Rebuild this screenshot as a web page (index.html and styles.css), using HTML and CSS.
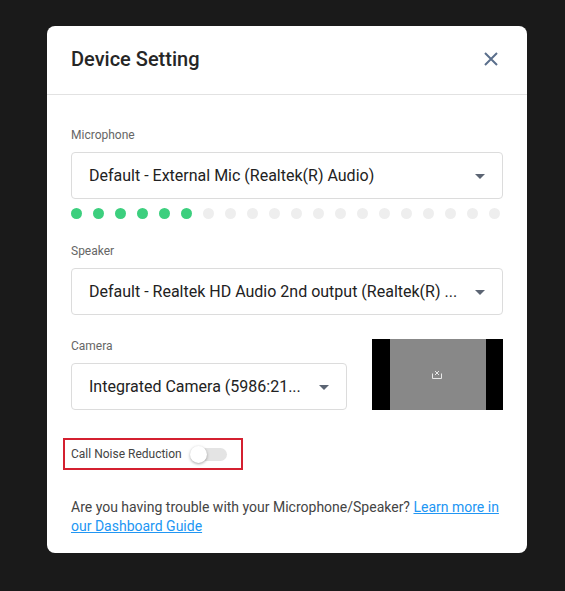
FILE: index.html
```html
<!DOCTYPE html>
<html>
<head>
<meta charset="utf-8">
<link rel="stylesheet" href="styles.css">
</head>
<body>
<div class="modal">
  <div class="header">
    <h1 class="title">Device Setting</h1>
    <svg class="close" width="16" height="16" viewBox="0 0 16 16"><path d="M2 2 L14 14 M14 2 L2 14" stroke="#5b6f8c" stroke-width="2" fill="none"/></svg>
  </div>
  <div class="content">
    <div class="label">Microphone</div>
    <div class="select"><span class="value">Default - External Mic (Realtek(R) Audio)</span><span class="caret"></span></div>
    <div class="dots">
      <span class="dot on"></span><span class="dot on"></span><span class="dot on"></span><span class="dot on"></span><span class="dot on"></span><span class="dot on"></span>
      <span class="dot"></span><span class="dot"></span><span class="dot"></span><span class="dot"></span><span class="dot"></span><span class="dot"></span><span class="dot"></span><span class="dot"></span><span class="dot"></span><span class="dot"></span><span class="dot"></span><span class="dot"></span><span class="dot"></span><span class="dot"></span>
    </div>

    <div class="label speaker-label">Speaker</div>
    <div class="select"><span class="value">Default - Realtek HD Audio 2nd output (Realtek(R) ...</span><span class="caret"></span></div>

    <div class="camera-row">
      <div class="camera-col">
        <div class="label">Camera</div>
        <div class="select camera-select"><span class="value">Integrated Camera (5986:21...</span><span class="caret"></span></div>
      </div>
      <div class="preview">
        <div class="preview-inner">
          <svg width="12" height="10" viewBox="0 0 12 10"><path d="M1.5 3.5 V8.5 H10.5 V3.5 M4 1 L8 5 M8 1 L4 5" stroke="#e8e8e8" stroke-width="1" fill="none"/></svg>
        </div>
      </div>
    </div>

    <div class="noise">
      <span class="noise-text">Call Noise Reduction</span>
      <span class="toggle"><span class="thumb"></span></span>
    </div>

    <p class="help">Are you having trouble with your Microphone/Speaker? <a href="#">Learn more in our Dashboard Guide</a></p>
  </div>
</div>
</body>
</html>
```

FILE: styles.css
```css
html, body {
  margin: 0;
  padding: 0;
}
body {
  background: #1a1a1a;
  width: 565px;
  height: 591px;
  overflow: hidden;
  font-family: Roboto, "Liberation Sans", sans-serif;
  padding-top: 26px;
  box-sizing: border-box;
}
.modal {
  margin-left: 47px;
  width: 480px;
  height: 527px;
  background: #fff;
  border-radius: 8px;
  box-sizing: border-box;
}
.header {
  height: 69px;
  border-bottom: 1px solid #e2e2e2;
  box-sizing: border-box;
  display: flex;
  align-items: center;
  justify-content: space-between;
  padding: 0 28px 2px 24px;
}
.title {
  margin: 0;
  font-size: 20px;
  font-weight: 500;
  color: #262626;
}
.close {
  display: block;
  margin-top: 0;
}
.content {
  padding: 33px 24px 0 24px;
}
.label {
  font-size: 12px;
  line-height: 14px;
  color: #666;
  margin-bottom: 10px;
}
.speaker-label {
  margin-top: 25px;
}
.select {
  height: 47px;
  border: 1px solid #dcdcdc;
  border-radius: 4px;
  box-sizing: border-box;
  display: flex;
  align-items: center;
  justify-content: space-between;
  padding: 0 17px 0 17px;
}
.value {
  font-size: 16px;
  color: #222;
  white-space: nowrap;
}
.caret {
  width: 0;
  height: 0;
  border-left: 5px solid transparent;
  border-right: 5px solid transparent;
  border-top: 5px solid #5b6473;
  margin-top: 2px;
}
.dots {
  display: flex;
  gap: 11px;
  margin-top: 9px;
}
.dot {
  width: 11px;
  height: 11px;
  border-radius: 50%;
  background: #eeeeee;
}
.dot.on {
  background: #3ccf7e;
}
.camera-row {
  display: flex;
  gap: 25px;
  margin-top: 24px;
}
.camera-col {
  width: 276px;
}
.camera-select {
  width: 276px;
  padding-right: 17px;
}
.preview {
  width: 131px;
  height: 71px;
  background: #000;
  display: flex;
  justify-content: center;
}
.preview-inner {
  width: 96px;
  height: 71px;
  background: #888888;
  display: flex;
  align-items: center;
  justify-content: center;
  margin-left: 1px;
}
.preview-inner svg {
  margin-top: 1px;
  margin-left: -2px;
}
.noise {
  display: inline-flex;
  align-items: center;
  margin-top: 28px;
  margin-left: -8px;
  width: 180px;
  height: 32px;
  box-sizing: border-box;
  border: 2px solid #d42030;
  padding-left: 6px;
}
.noise-text {
  font-size: 12px;
  color: #444;
}
.toggle {
  position: relative;
  width: 35px;
  height: 13px;
  border-radius: 7px;
  background: #e4e4e4;
  margin-left: 10px;
  margin-top: 1px;
}
.thumb {
  position: absolute;
  left: -2px;
  top: -2px;
  width: 17px;
  height: 17px;
  border-radius: 50%;
  background: #fff;
  box-shadow: 0 1px 3px rgba(0,0,0,0.35);
}
.help {
  margin: 28px 0 0 0;
  font-size: 14px;
  line-height: 19px;
  color: #444;
}
.help a {
  color: #2196f3;
  text-decoration: underline;
}
```
